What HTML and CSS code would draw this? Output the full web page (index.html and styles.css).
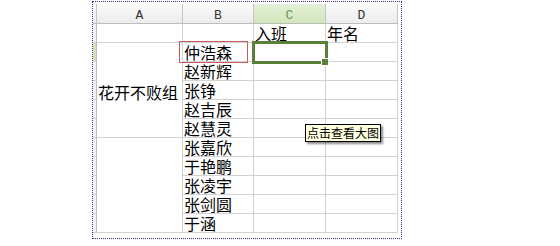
FILE: index.html
```html
<!DOCTYPE html>
<html lang="zh-CN">
<head>
<meta charset="utf-8">
<title>Sheet</title>
<link rel="stylesheet" href="styles.css">
</head>
<body>
<div class="page">
  <div class="frame">
    <div class="sheet">
      <div class="hd corner"></div>
      <div class="hd">A</div>
      <div class="hd">B</div>
      <div class="hd hd-sel">C</div>
      <div class="hd">D</div>

      <div class="rh"></div><div class="c"></div><div class="c"></div><div class="c">入班</div><div class="c">年名</div>

      <div class="rh rh-sel"></div><div class="c merged group">花开不败组</div><div class="c name">仲浩森</div><div class="c"></div><div class="c"></div>
      <div class="rh"></div><div class="c name">赵新辉</div><div class="c"></div><div class="c"></div>
      <div class="rh"></div><div class="c name">张铮</div><div class="c"></div><div class="c"></div>
      <div class="rh"></div><div class="c name">赵吉辰</div><div class="c"></div><div class="c"></div>
      <div class="rh"></div><div class="c name">赵慧灵</div><div class="c"></div><div class="c"></div>

      <div class="rh"></div><div class="c merged"></div><div class="c name">张嘉欣</div><div class="c"></div><div class="c"></div>
      <div class="rh"></div><div class="c name">于艳鹏</div><div class="c"></div><div class="c"></div>
      <div class="rh"></div><div class="c name">张凌宇</div><div class="c"></div><div class="c"></div>
      <div class="rh"></div><div class="c name">张剑圆</div><div class="c"></div><div class="c"></div>
      <div class="rh"></div><div class="c name">于涵</div><div class="c"></div><div class="c"></div>
    </div>

    <div class="mark"></div>
    <div class="selection"></div>
    <div class="handle"></div>
    <div class="tip">点击查看大图</div>
  </div>
</div>
</body>
</html>
```

FILE: styles.css
```css
html, body {
  margin: 0;
  padding: 0;
  background: #ffffff;
}

.page {
  padding: 1px 0 0 92px;
}

.frame {
  position: relative;
  width: fit-content;
  border: 1px dotted #4a2a8e;
  padding: 2px 3px 5px 0;
}

.sheet {
  display: grid;
  grid-template-columns: 4px 86px 71px 72px 72px;
  grid-template-rows: 20px repeat(11, 19px);
  font-family: "Noto Sans CJK SC", "Noto Sans", sans-serif;
  font-size: 16px;
  color: #000;
}

.sheet > div {
  box-sizing: border-box;
  border-right: 1px solid #d2d2d2;
  border-bottom: 1px solid #d2d2d2;
  line-height: 19px;
  white-space: nowrap;
  overflow: visible;
}

.hd {
  display: flex;
  justify-content: center;
  align-items: flex-end;
  font-family: "Liberation Mono", "DejaVu Sans Mono", monospace;
  font-size: 13px;
  color: #333;
  background: linear-gradient(#fbfbfb, #ececec);
  border-right-color: #c6c6c6 !important;
  border-bottom-color: #bdbdbd !important;
}

.sheet > .hd {
  line-height: 15px;
}

.hd-sel {
  background: linear-gradient(#e4f0d6, #d2e6bc);
  color: #6a9a4e;
}

.rh {
  background: #f1f1f1;
  border-right-color: #bdbdbd !important;
}

.rh-sel {
  background: #cfe3b6;
}

.c {
  padding-left: 1px;
}

.merged {
  grid-row: span 5;
}

.group {
  display: flex;
  align-items: center;
  padding-left: 1px;
  padding-top: 5px;
}

.mark {
  position: absolute;
  left: 86px;
  top: 39px;
  width: 69px;
  height: 22px;
  box-sizing: border-box;
  border: 1px solid #c95b5b;
}

.selection {
  position: absolute;
  left: 159px;
  top: 39px;
  width: 76px;
  height: 23px;
  box-sizing: border-box;
  border: 3px solid #5a7f3a;
}

.handle {
  position: absolute;
  left: 228px;
  top: 56px;
  width: 6px;
  height: 6px;
  background: #5a7f3a;
  border: 1px solid #ffffff;
}

.tip {
  position: absolute;
  left: 212px;
  top: 122px;
  box-sizing: border-box;
  height: 18px;
  padding: 0 1px;
  border: 1px solid #000;
  background: #ffffe1;
  font-family: "Noto Sans CJK SC", "Noto Sans", sans-serif;
  font-size: 12px;
  line-height: 16px;
  color: #000;
  white-space: nowrap;
  box-shadow: 2px 2px 2px rgba(0, 0, 0, 0.45);
}
```
